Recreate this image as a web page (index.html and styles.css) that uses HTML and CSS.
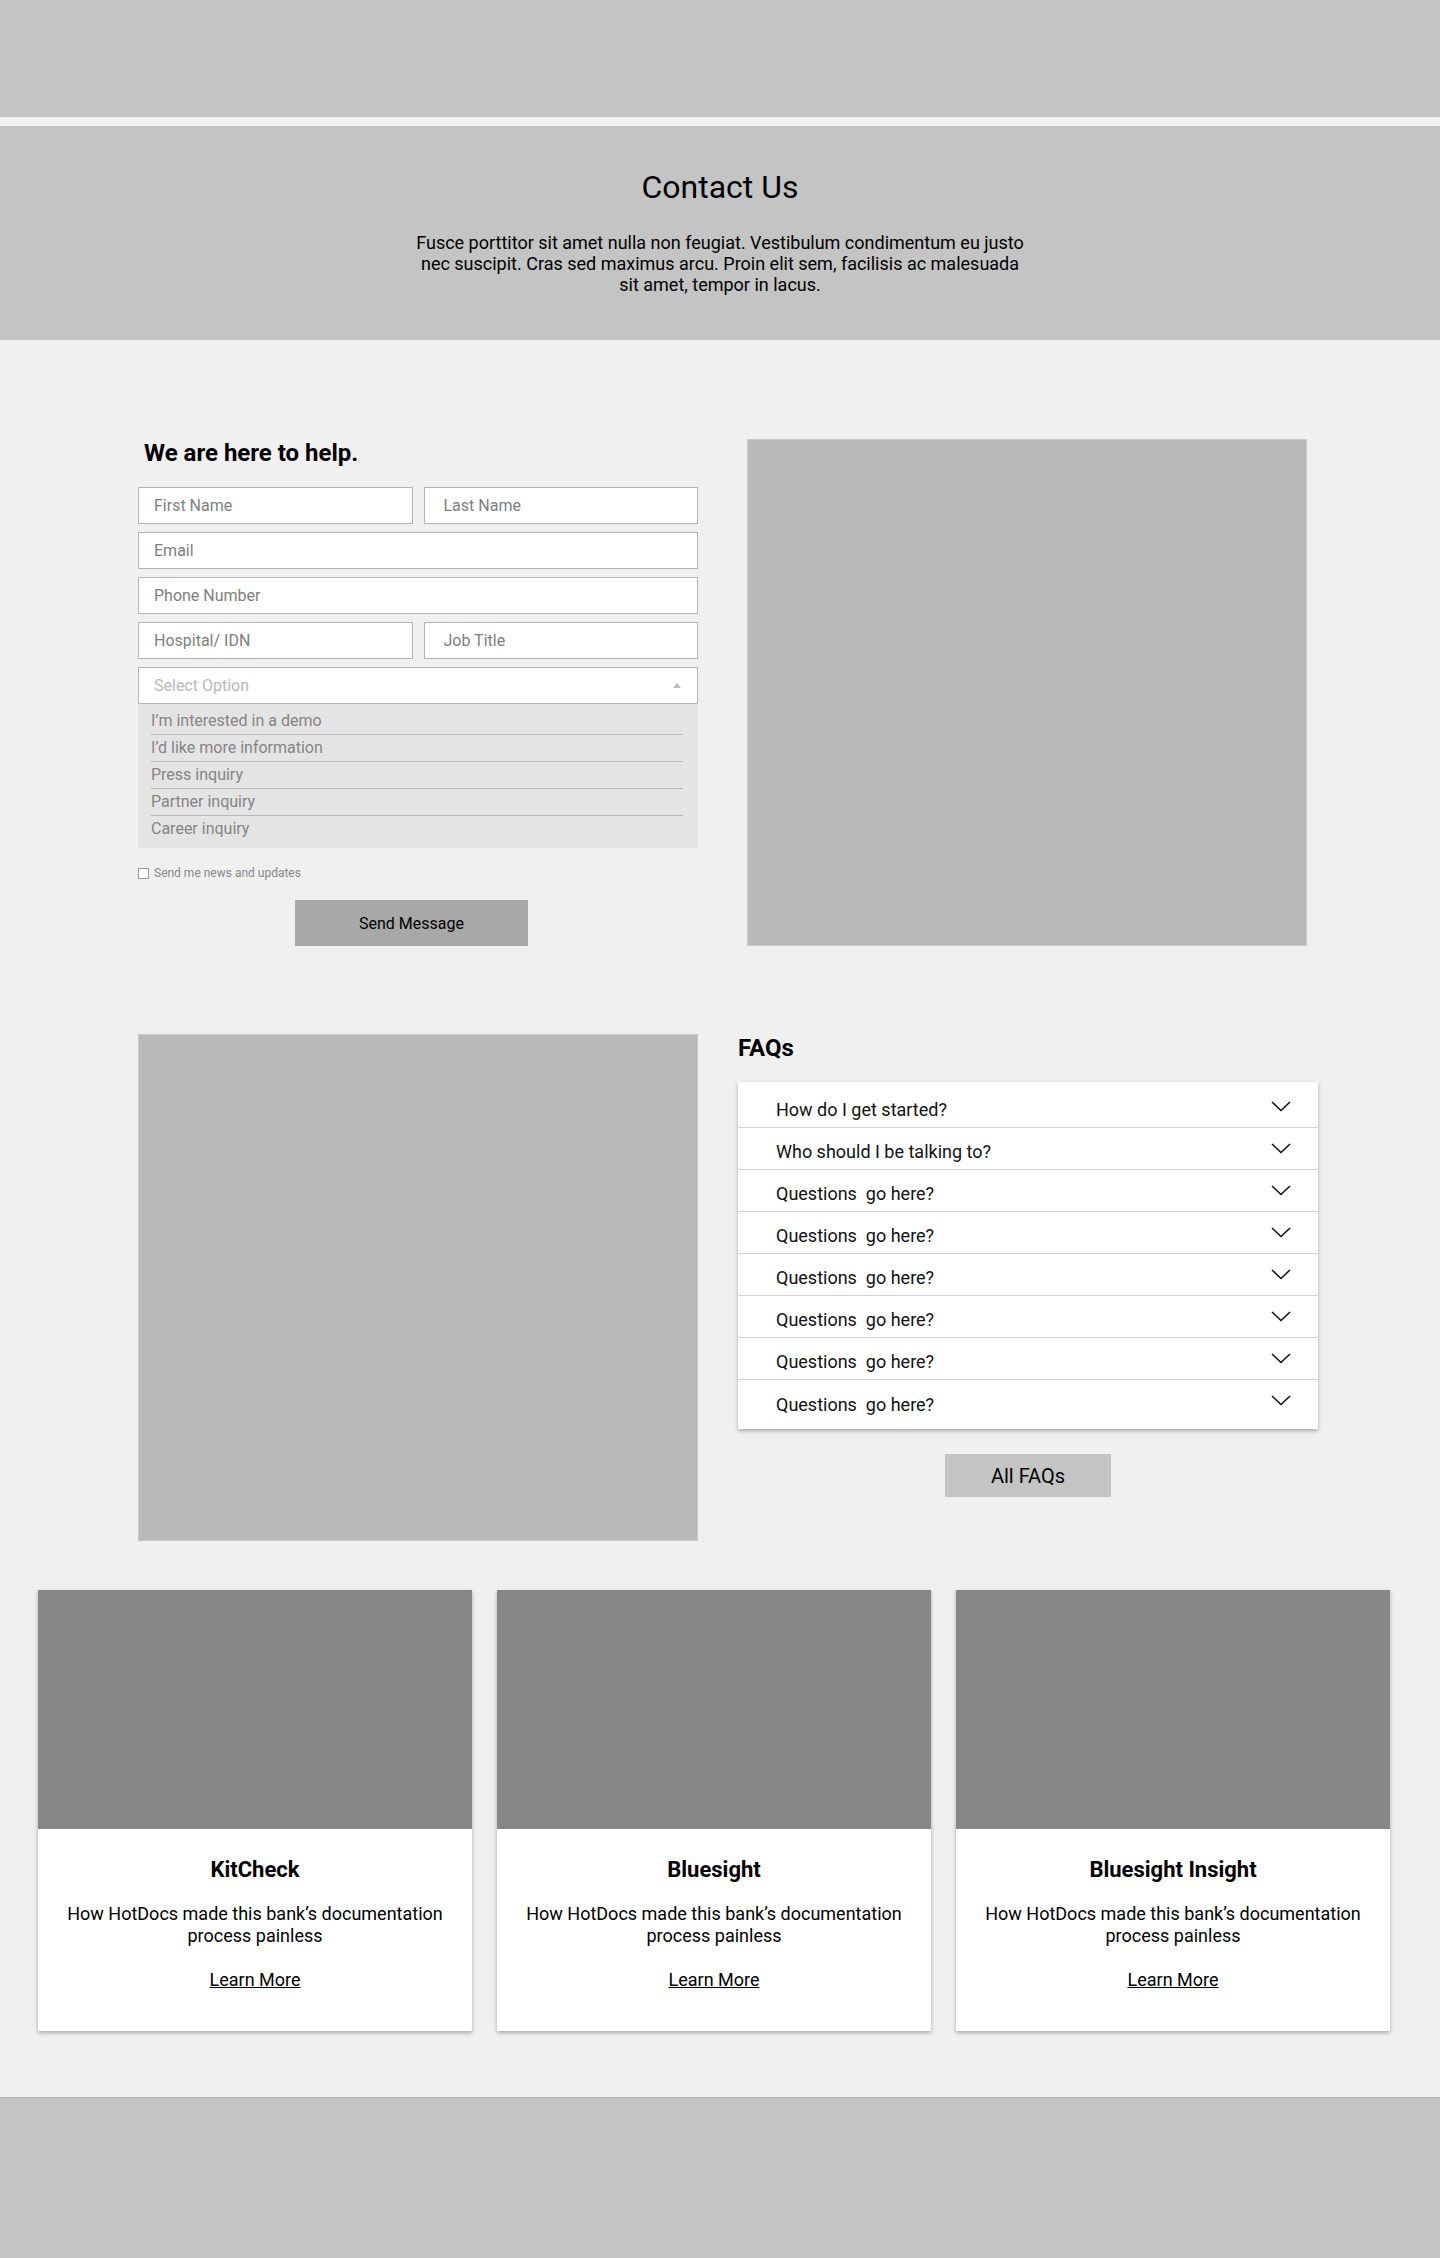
FILE: index.html
```html
<!DOCTYPE html>
<html lang="en">
<head>
    <meta charset="UTF-8">
    <meta name="viewport" content="width=device-width, initial-scale=1.0">
    <title>Contact Us</title>
    <link rel="stylesheet" href="styles.css">
</head>
<body>
    <!-- Top bar -->
    <header class="topbar"></header>

    <!-- Hero -->
    <section class="hero">
        <h1>Contact Us</h1>
        <p>Fusce porttitor sit amet nulla non feugiat. Vestibulum condimentum eu justo nec suscipit. Cras sed maximus arcu. Proin elit sem, facilisis ac malesuada sit amet, tempor in lacus.</p>
    </section>

    <main class="main">
        <!-- Contact form + picture -->
        <section class="contact-row">
            <form class="contact-form">
                <h2>We are here to help.</h2>
                <div class="fields">
                    <div class="field-pair">
                        <input type="text" placeholder="First Name">
                        <input type="text" placeholder="Last Name">
                    </div>
                    <input type="email" placeholder="Email">
                    <input type="tel" placeholder="Phone Number">
                    <div class="field-pair">
                        <input type="text" placeholder="Hospital/ IDN">
                        <input type="text" placeholder="Job Title">
                    </div>
                    <div class="select-box">
                        <div class="select-head">
                            <span>Select Option</span>
                            <span class="caret"></span>
                        </div>
                        <ul class="select-list">
                            <li>I’m interested in a demo</li>
                            <li>I’d like more information</li>
                            <li>Press inquiry</li>
                            <li>Partner inquiry</li>
                            <li>Career inquiry</li>
                        </ul>
                    </div>
                </div>
                <label class="news">
                    <span class="box"></span>
                    Send me news and updates
                </label>
                <div class="send-wrap">
                    <button type="button" class="send-btn">Send Message</button>
                </div>
            </form>
            <div class="picture"></div>
        </section>

        <!-- FAQ -->
        <section class="faq-row">
            <div class="picture tall"></div>
            <div class="faq">
                <h2>FAQs</h2>
                <div class="faq-list">
                    <div class="faq-item"><span>How do I get started?</span><svg class="chev" viewBox="0 0 20 11"><polyline points="1,1 10,9.5 19,1"/></svg></div>
                    <div class="faq-item"><span>Who should I be talking to?</span><svg class="chev" viewBox="0 0 20 11"><polyline points="1,1 10,9.5 19,1"/></svg></div>
                    <div class="faq-item"><span>Questions&nbsp; go here?</span><svg class="chev" viewBox="0 0 20 11"><polyline points="1,1 10,9.5 19,1"/></svg></div>
                    <div class="faq-item"><span>Questions&nbsp; go here?</span><svg class="chev" viewBox="0 0 20 11"><polyline points="1,1 10,9.5 19,1"/></svg></div>
                    <div class="faq-item"><span>Questions&nbsp; go here?</span><svg class="chev" viewBox="0 0 20 11"><polyline points="1,1 10,9.5 19,1"/></svg></div>
                    <div class="faq-item"><span>Questions&nbsp; go here?</span><svg class="chev" viewBox="0 0 20 11"><polyline points="1,1 10,9.5 19,1"/></svg></div>
                    <div class="faq-item"><span>Questions&nbsp; go here?</span><svg class="chev" viewBox="0 0 20 11"><polyline points="1,1 10,9.5 19,1"/></svg></div>
                    <div class="faq-item"><span>Questions&nbsp; go here?</span><svg class="chev" viewBox="0 0 20 11"><polyline points="1,1 10,9.5 19,1"/></svg></div>
                </div>
                <div class="center">
                    <button type="button" class="all-btn">All FAQs</button>
                </div>
            </div>
        </section>

        <!-- Case studies -->
        <section class="cards">
            <div class="card">
                <div class="card-img"></div>
                <div class="card-body">
                    <h3>KitCheck</h3>
                    <p>How HotDocs made this bank’s documentation process painless</p>
                    <a href="#">Learn More</a>
                </div>
            </div>
            <div class="card">
                <div class="card-img"></div>
                <div class="card-body">
                    <h3>Bluesight</h3>
                    <p>How HotDocs made this bank’s documentation process painless</p>
                    <a href="#">Learn More</a>
                </div>
            </div>
            <div class="card">
                <div class="card-img"></div>
                <div class="card-body">
                    <h3>Bluesight Insight</h3>
                    <p>How HotDocs made this bank’s documentation process painless</p>
                    <a href="#">Learn More</a>
                </div>
            </div>
        </section>
    </main>

    <footer class="footer"></footer>
</body>
</html>
```

FILE: styles.css
```css
body {
    font-family: Roboto, "Liberation Sans", Arial, sans-serif;
    background-color: #f0f0f0;
    color: #000;
    margin: 0;
    padding: 0;
}

/* Top bar and hero */
.topbar {
    height: 117px;
    background: #c4c4c4;
    margin-bottom: 9px;
}

.hero {
    background: #c4c4c4;
    text-align: center;
    padding: 42px 0 45px;
}

.hero h1 {
    margin: 0;
    font-size: 32px;
    font-weight: 400;
    line-height: 38px;
}

.hero p {
    width: 620px;
    margin: 26px auto 0;
    font-size: 18px;
    line-height: 21px;
}

/* Main area */
.main {
    padding-top: 99px;
}

.contact-row {
    display: grid;
    grid-template-columns: 560px 560px;
    gap: 49px;
    padding-left: 138px;
}

.contact-form h2,
.faq h2 {
    margin: 0 0 20px;
    font-size: 24px;
    line-height: 28px;
    font-weight: 700;
}

.contact-form h2 {
    padding-left: 6px;
}

.fields {
    display: flex;
    flex-direction: column;
    gap: 8px;
}

.field-pair {
    display: grid;
    grid-template-columns: 1fr 1fr;
    gap: 11px;
}

.fields input {
    height: 37px;
    box-sizing: border-box;
    border: 1px solid #b4b4b4;
    background: #fff;
    padding: 0 15px;
    font-family: inherit;
    font-size: 16px;
    color: #333;
    margin: 0;
    width: 100%;
}

.field-pair input:last-child {
    padding-left: 19px;
}

.fields input::placeholder {
    color: #7e7e7e;
}

.select-box {
    display: flex;
    flex-direction: column;
}

.select-head {
    height: 37px;
    box-sizing: border-box;
    border: 1px solid #b4b4b4;
    background: #fff;
    padding: 0 16px 0 15px;
    display: flex;
    align-items: center;
    justify-content: space-between;
    font-size: 16px;
    color: #b9b9b9;
}

.caret {
    width: 0;
    height: 0;
    border-left: 4px solid transparent;
    border-right: 4px solid transparent;
    border-bottom: 5px solid #bdbdbd;
}

.select-list {
    list-style: none;
    margin: 0;
    padding: 4px 15px 6px 13px;
    background: #e4e4e4;
}

.select-list li {
    height: 26px;
    line-height: 26px;
    font-size: 16px;
    color: #858585;
    border-bottom: 1px solid #b8b8b8;
}

.select-list li:last-child {
    border-bottom: none;
}

.news {
    display: flex;
    align-items: center;
    gap: 5px;
    margin-top: 18px;
    font-size: 12px;
    color: #888;
}

.news .box {
    width: 9px;
    height: 9px;
    border: 1px solid #999;
    background: #fff;
}

.send-wrap {
    margin-top: 20px;
    padding-left: 157px;
}

button {
    font-family: inherit;
    border: none;
    cursor: pointer;
    color: #000;
}

.send-btn {
    width: 233px;
    height: 46px;
    background: #a8a8a8;
    font-size: 16px;
}

.picture {
    background: #b9b9b9;
    border: 1px solid #c9c9c9;
    box-sizing: border-box;
}

/* FAQ */
.faq-row {
    display: grid;
    grid-template-columns: 560px 580px;
    gap: 40px;
    padding-left: 138px;
    margin-top: 88px;
}

.picture.tall {
    height: 507px;
}

.faq-list {
    background: #fff;
    padding: 4px 0 7px;
    box-shadow: 0 2px 4px rgba(0, 0, 0, 0.3);
}

.faq-item {
    height: 42px;
    box-sizing: border-box;
    padding: 6px 27px 0 38px;
    display: flex;
    align-items: center;
    justify-content: space-between;
    font-size: 18px;
    color: #111;
    border-bottom: 1px solid #d2d2d2;
}

.faq-item:last-child {
    border-bottom: none;
}

.chev {
    width: 20px;
    height: 11px;
    margin-top: -7px;
}

.chev polyline {
    fill: none;
    stroke: #111;
    stroke-width: 1.6;
}

.center {
    display: flex;
    justify-content: center;
    margin-top: 25px;
}

.all-btn {
    width: 166px;
    height: 43px;
    background: #c4c4c4;
    font-size: 20px;
}

/* Cards */
.cards {
    display: grid;
    grid-template-columns: repeat(3, 434px);
    gap: 25px;
    padding-left: 38px;
    margin-top: 49px;
}

.card {
    background: #fff;
    box-shadow: 0 2px 4px rgba(0, 0, 0, 0.3);
    text-align: center;
}

.card-img {
    height: 239px;
    background: #878787;
}

.card-body {
    height: 202px;
    box-sizing: border-box;
    padding: 28px 28px 0;
}

.card-body h3 {
    margin: 0;
    font-size: 22px;
    line-height: 26px;
    font-weight: 700;
}

.card-body p {
    margin: 20px 0 0;
    font-size: 18px;
    line-height: 22px;
}

.card-body a {
    display: inline-block;
    margin-top: 22px;
    font-size: 18px;
    line-height: 22px;
    color: #000;
}

.footer {
    height: 161px;
    margin-top: 66px;
    background: #c4c4c4;
    border-top: 1px solid #bababa;
}
```
